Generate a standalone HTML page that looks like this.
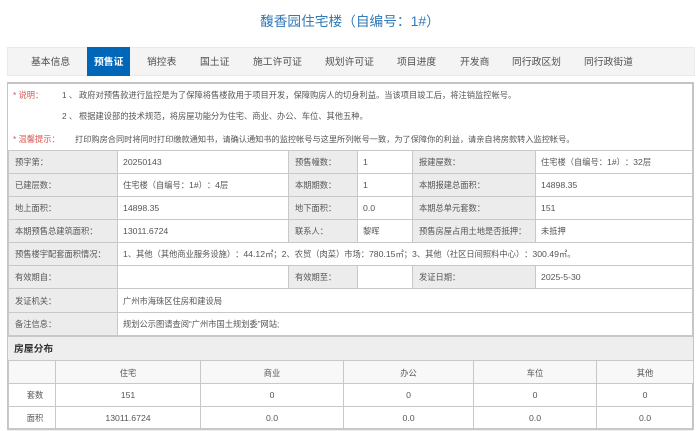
<!DOCTYPE html>
<html lang="zh-CN">
<head>
<meta charset="utf-8">
<title>馥香园住宅楼</title>
<style>
html,body{margin:0;padding:0;background:#fff;}
body{width:700px;height:431px;overflow:hidden;position:relative;font-family:"Liberation Sans","Noto Sans CJK SC",sans-serif;color:#555;text-spacing-trim:space-all;}
#w{position:absolute;left:0;top:0;width:700px;height:431px;overflow:hidden;filter:blur(0.3px);background:#fff;}
.a{position:absolute;white-space:nowrap;}
.d{font-size:8.7px;}
.title{left:260px;top:11px;height:20px;line-height:20px;font-size:13.7px;color:#337ab7;}
.nav{left:7px;top:47px;width:686px;height:27px;background:#f4f4f4;border:1px solid #eaeaea;}
.act{left:87px;top:47px;width:43px;height:29px;background:#0066b8;}
.n{top:48px;height:29px;line-height:29px;font-size:9.8px;color:#505050;}
.box{left:7px;top:82px;width:684px;height:346px;border:1px solid #c4c4c4;border-width:2px 2px 0 1px;}
.note{font-size:8.25px;line-height:12px;height:12px;color:#555;}
.red{color:#d9534f;}
.t{position:absolute;border-collapse:collapse;table-layout:fixed;font-size:8.25px;color:#555;}
.t td{border:1px solid #c8c8c8;padding:0;height:22px;overflow:hidden;white-space:nowrap;}
.main{left:8px;top:150px;width:685px;}
.main td{padding-left:5px;}
.main td.l{background:#ececec;padding-left:6px;}
.head{left:8px;top:335px;width:685px;height:25px;background:#eee;border-top:2px solid #c8c8c8;box-sizing:border-box;font-size:9.8px;font-weight:bold;color:#333;line-height:25px;padding-left:6px;}
.sub{left:8px;top:360px;width:685px;}
.sub td{text-align:center;height:22px;}
.sub tr.h td{background:#f8f8f8;padding-top:2px;height:20px;}
.sub tr.r3 td{padding-bottom:1px;height:21px;}
.sub td.f{padding-left:6px;}
.bot{left:8px;top:428px;width:685px;height:3px;background:#eee;border-top:2px solid #c8c8c8;box-sizing:border-box;}
</style>
</head>
<body>
<div id="w">
<div class="a title">馥香园住宅楼（自编号：<span style="font-size:14px">1#</span>）</div>

<div class="a nav"></div>
<div class="a act"></div>
<div class="a n" style="left:31px">基本信息</div>
<div class="a n" style="left:94px;color:#fff;font-weight:bold">预售证</div>
<div class="a n" style="left:147px">销控表</div>
<div class="a n" style="left:200px">国土证</div>
<div class="a n" style="left:253px">施工许可证</div>
<div class="a n" style="left:325px">规划许可证</div>
<div class="a n" style="left:397px">项目进度</div>
<div class="a n" style="left:460px">开发商</div>
<div class="a n" style="left:512px">同行政区划</div>
<div class="a n" style="left:584px">同行政街道</div>

<div class="a box"></div>
<div class="a note red" style="left:13px;top:90px">* 说明：</div>
<div class="a note" style="left:62px;top:90px">1 、</div>
<div class="a note" style="left:79px;top:90px">政府对预售款进行监控是为了保障将售楼款用于项目开发，保障购房人的切身利益。当该项目竣工后，将注销监控帐号。</div>
<div class="a note" style="left:62px;top:111px">2 、</div>
<div class="a note" style="left:79px;top:111px">根据建设部的技术规范，将房屋功能分为住宅、商业、办公、车位、其他五种。</div>
<div class="a note red" style="left:13px;top:134px">* 温馨提示：</div>
<div class="a note" style="left:75px;top:134px;font-size:8.2px">打印购房合同时将同时打印缴款通知书，请确认通知书的监控帐号与这里所列帐号一致，为了保障你的利益，请亲自将房款转入监控帐号。</div>

<table class="t main">
<colgroup><col style="width:109px"><col style="width:171px"><col style="width:69px"><col style="width:55px"><col style="width:123px"><col style="width:158px"></colgroup>
<tr><td class="l">预字第：</td><td><span class="d">20250143</span></td><td class="l">预售幢数：</td><td><span class="d">1</span></td><td class="l">报建屋数：</td><td>住宅楼（自编号：<span class="d">1#</span>）：<span class="d">32</span>层</td></tr>
<tr><td class="l">已建层数：</td><td>住宅楼（自编号：<span class="d">1#</span>）：<span class="d">4</span>层</td><td class="l">本期期数：</td><td><span class="d">1</span></td><td class="l">本期报建总面积：</td><td><span class="d">14898.35</span></td></tr>
<tr><td class="l">地上面积：</td><td><span class="d">14898.35</span></td><td class="l">地下面积：</td><td><span class="d">0.0</span></td><td class="l">本期总单元套数：</td><td><span class="d">151</span></td></tr>
<tr><td class="l">本期预售总建筑面积：</td><td><span class="d">13011.6724</span></td><td class="l">联系人：</td><td>黎晖</td><td class="l">预售房屋占用土地是否抵押：</td><td>未抵押</td></tr>
<tr><td class="l">预售楼宇配套面积情况：</td><td colspan="5"><span class="d">1</span>、其他（其他商业服务设施）：<span class="d">44.12</span>㎡；<span class="d">2</span>、农贸（肉菜）市场：<span class="d">780.15</span>㎡；<span class="d">3</span>、其他（社区日间照料中心）：<span class="d">300.49</span>㎡。</td></tr>
<tr><td class="l">有效期自：</td><td></td><td class="l">有效期至：</td><td></td><td class="l">发证日期：</td><td><span class="d">2025-5-30</span></td></tr>
<tr><td class="l" style="height:23px">发证机关：</td><td colspan="5">广州市海珠区住房和建设局</td></tr>
<tr><td class="l">备注信息：</td><td colspan="5">规划公示图请查阅“广州市国土规划委”网站;</td></tr>
</table>

<div class="a head">房屋分布</div>
<table class="t sub">
<colgroup><col style="width:47px"><col style="width:145px"><col style="width:143px"><col style="width:130px"><col style="width:123px"><col style="width:97px"></colgroup>
<tr class="h"><td></td><td>住宅</td><td>商业</td><td>办公</td><td>车位</td><td>其他</td></tr>
<tr><td class="f" style="height:21px">套数</td><td><span class="d">151</span></td><td><span class="d">0</span></td><td><span class="d">0</span></td><td><span class="d">0</span></td><td><span class="d">0</span></td></tr>
<tr class="r3"><td class="f">面积</td><td><span class="d">13011.6724</span></td><td><span class="d">0.0</span></td><td><span class="d">0.0</span></td><td><span class="d">0.0</span></td><td><span class="d">0.0</span></td></tr>
</table>
<div class="a bot"></div>
</div>
</body>
</html>
